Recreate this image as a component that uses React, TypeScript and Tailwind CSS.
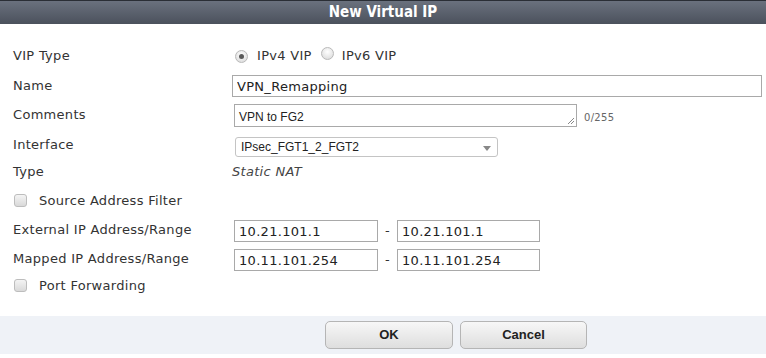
import React from "react";

const verdana = "font-['DejaVu_Sans',Verdana,sans-serif] tracking-[0.3px]";
const arial = "font-['Liberation_Sans',Arial,sans-serif]";

function Radio(props: { checked?: boolean }) {
  return (
    <span className="relative inline-block h-[13px] w-[13px] rounded-full border border-[#b9b9b9] bg-[radial-gradient(circle_at_50%_35%,#ffffff,#d6d6d6)]">
      {props.checked ? <span className="absolute left-[3px] top-[3px] h-[5px] w-[5px] rounded-full bg-[#5a5a5a]" /> : null}
    </span>
  );
}

function Checkbox() {
  return <span className="inline-block h-[13px] w-[13px] rounded-[3px] border border-[#bdbdbd] bg-[linear-gradient(#f4f4f4,#d9d9d9)]" />;
}

function TextBox(props: { value: string; className?: string }) {
  return (
    <input
      readOnly
      value={props.value}
      className={["border border-[#a9a9a9] bg-white px-[4px] text-[13px] text-[#222] outline-none", verdana, props.className]
        .filter(Boolean)
        .join(" ")}
    />
  );
}

function Label(props: { children: React.ReactNode }) {
  return <div className={`w-[219px] shrink-0 text-[13px] text-[#333] ${verdana}`}>{props.children}</div>;
}

export default function App() {
  return (
    <div className="h-[358px] w-[766px] overflow-hidden bg-white">
      <div className="flex h-[24px] items-center justify-center border-t border-[#2a2e35] bg-[linear-gradient(#6a717e,#4b515c)]">
        <span className="font-['DejaVu_Sans_Condensed','DejaVu_Sans',sans-serif] text-[15px] font-bold text-white [font-stretch:condensed]">
          New Virtual IP
        </span>
      </div>

      <div className="pl-[13px]">
        <div className="mt-[20px] flex h-[24px] items-center">
          <Label>VIP Type</Label>
          <div className={`ml-[3px] flex items-center text-[13px] text-[#333] ${verdana}`}>
            <Radio checked />
            <span className="ml-[9px]">IPv4 VIP</span>
            <span className="ml-[9px]">
              <Radio />
            </span>
            <span className="ml-[8px]">IPv6 VIP</span>
          </div>
        </div>

        <div className="mt-[7px] flex h-[22px] items-center">
          <Label>Name</Label>
          <TextBox value="VPN_Remapping" className="h-[22px] w-[530px]" />
        </div>

        <div className="mt-[7px] flex h-[23px] items-start">
          <div className="pt-[1px]">
            <Label>Comments</Label>
          </div>
          <div className="ml-[2px] flex items-end">
            <div className={`relative h-[23px] w-[343px] border border-[#a9a9a9] bg-white px-[4px] pt-[3px] text-[12px] text-[#222] ${arial}`}>
              VPN to FG2
              <svg className="absolute bottom-[1px] right-[1px]" width="8" height="8" viewBox="0 0 8 8">
                <path d="M7 1L1 7M7 4L4 7" stroke="#888" strokeWidth="1" />
              </svg>
            </div>
            <span className={`ml-[7px] pb-[2px] text-[10px] text-[#666] ${verdana}`}>0/255</span>
          </div>
        </div>

        <div className="mt-[10px] flex h-[20px] items-start">
          <div className="-mt-[2px]">
            <Label>Interface</Label>
          </div>
          <div className={`relative ml-[3px] flex h-[20px] w-[263px] items-center rounded-[3px] border border-[#c4c4c4] bg-white pl-[5px] text-[12px] text-[#222] ${arial}`}>
            IPsec_FGT1_2_FGT2
            <svg className="absolute right-[6px] top-[8px]" width="8" height="5" viewBox="0 0 8 5">
              <path d="M0 0H8L4 5Z" fill="#888" />
            </svg>
          </div>
        </div>

        <div className="mt-[6px] flex h-[18px] items-center">
          <Label>Type</Label>
          <span className={`text-[13px] italic text-[#444] ${verdana}`}>Static NAT</span>
        </div>

        <div className="mt-[11px] flex h-[18px] items-center">
          <span className="ml-[1px]">
            <Checkbox />
          </span>
          <span className={`ml-[12px] text-[13px] text-[#333] ${verdana}`}>Source Address Filter</span>
        </div>

        <div className="mt-[10px] flex h-[22px] items-start">
          <Label>External IP Address/Range</Label>
          <div className="ml-[2px] flex items-center">
            <TextBox value="10.21.101.1" className="h-[22px] w-[144px]" />
            <span className={`w-[19px] text-center text-[13px] text-[#333] ${verdana}`}>-</span>
            <TextBox value="10.21.101.1" className="h-[22px] w-[143px]" />
          </div>
        </div>

        <div className="mt-[7px] flex h-[22px] items-start">
          <Label>Mapped IP Address/Range</Label>
          <div className="ml-[2px] flex items-center">
            <TextBox value="10.11.101.254" className="h-[22px] w-[144px]" />
            <span className={`w-[19px] text-center text-[13px] text-[#333] ${verdana}`}>-</span>
            <TextBox value="10.11.101.254" className="h-[22px] w-[143px]" />
          </div>
        </div>

        <div className="mt-[6px] flex h-[18px] items-center">
          <span className="ml-[1px]">
            <Checkbox />
          </span>
          <span className={`ml-[12px] text-[13px] text-[#333] ${verdana}`}>Port Forwarding</span>
        </div>
      </div>

      <div className="mt-[21px] flex h-[38px] items-center gap-[7px] bg-[#eff2f7] pl-[325px]">
        <button
          type="button"
          className={`h-[28px] w-[128px] rounded-[5px] border border-[#b5b5b5] bg-[linear-gradient(#f7f7f7,#dedede)] text-[13px] font-bold text-[#222] ${arial}`}
        >
          OK
        </button>
        <button
          type="button"
          className={`h-[28px] w-[127px] rounded-[5px] border border-[#b5b5b5] bg-[linear-gradient(#f7f7f7,#dedede)] text-[13px] font-bold text-[#222] ${arial}`}
        >
          Cancel
        </button>
      </div>
    </div>
  );
}
